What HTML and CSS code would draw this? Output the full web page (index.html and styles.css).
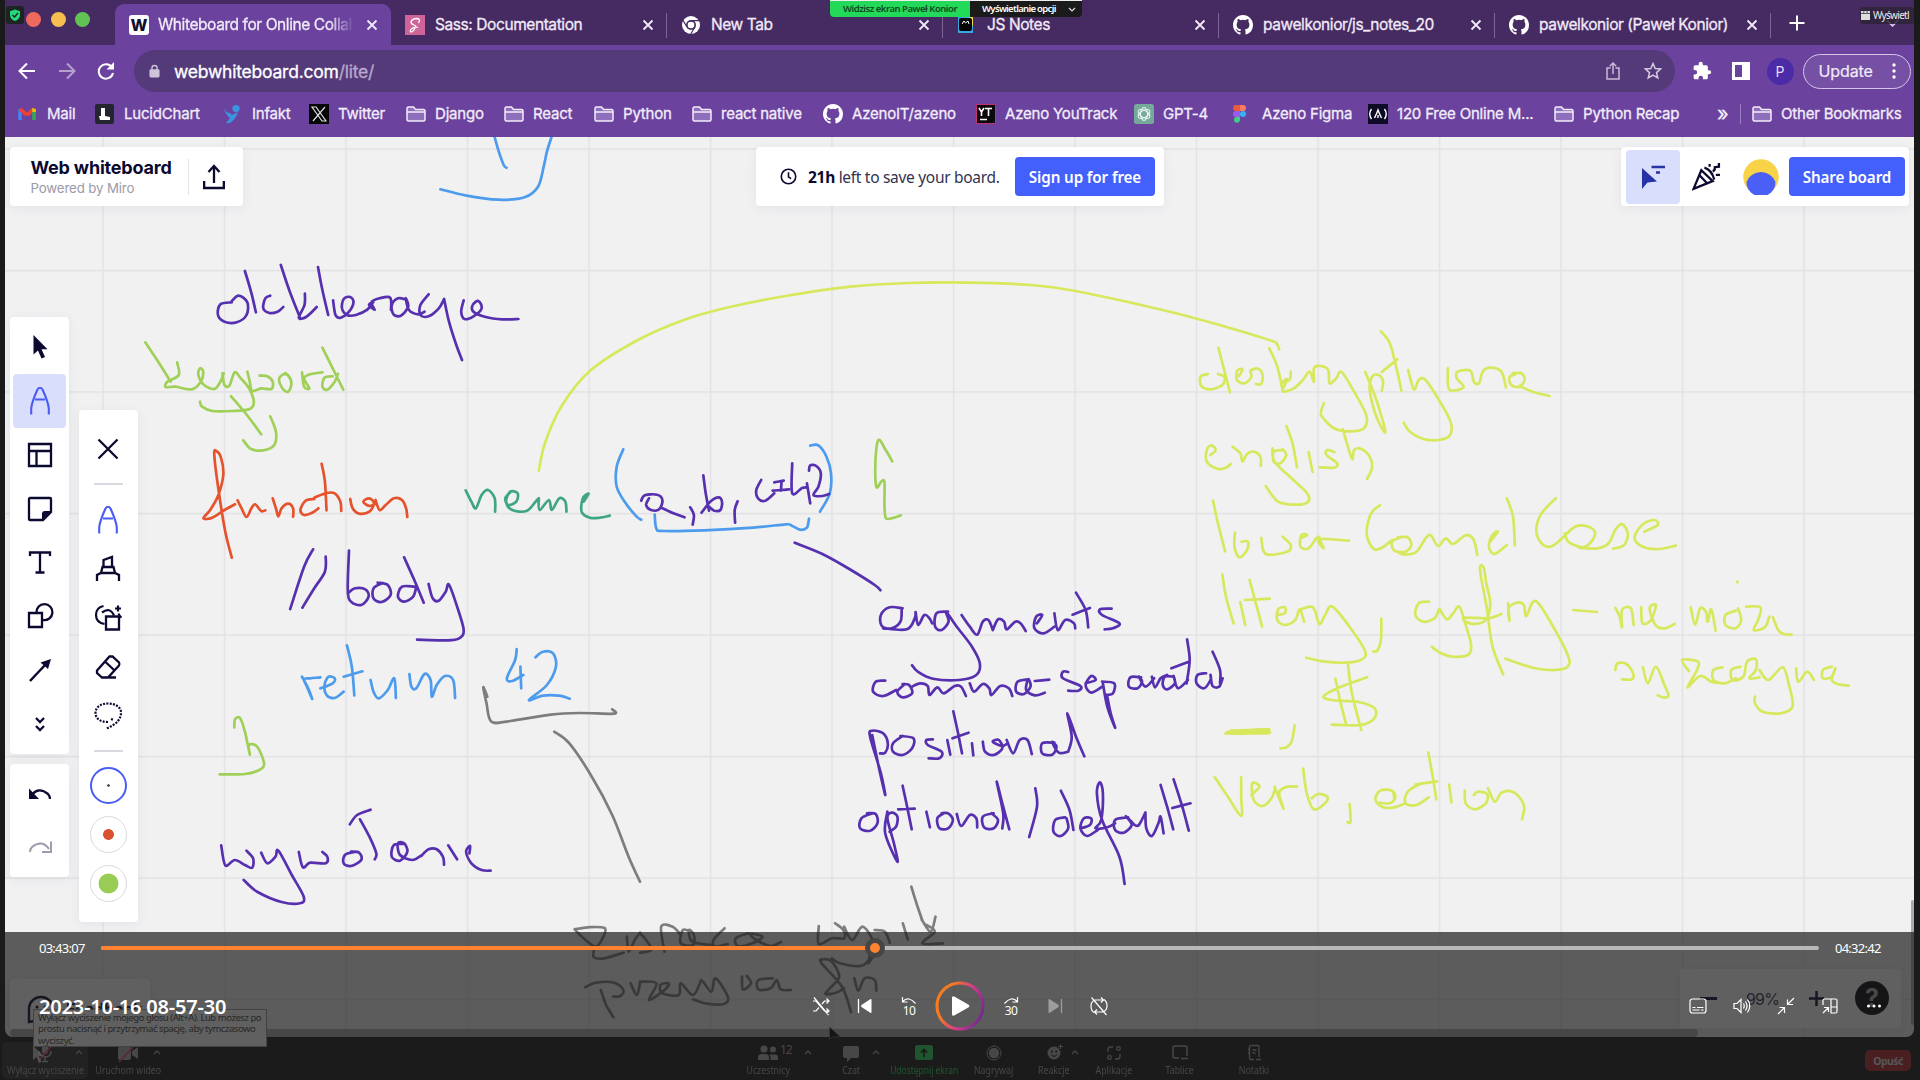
FILE: index.html
```html
<!DOCTYPE html>
<html lang="pl">
<head>
<meta charset="utf-8">
<title>2023-10-16 08-57-30</title>
<link rel="stylesheet" href="styles.css">
</head>
<body>
<svg class="defs" width="0" height="0" aria-hidden="true">
  <symbol id="close" viewBox="0 0 12 12"><path d="M1.5 1.5l9 9M10.500 1.500l-9 9" fill="none" stroke="currentColor" stroke-width="1.8"/></symbol>
  <symbol id="github" viewBox="0 0 16 16"><path fill="currentColor" d="M8 0C3.580 0 0 3.580 0 8c0 3.540 2.290 6.530 5.470 7.590.4.070.55-.17.55-.38 0-.19-.01-.82-.01-1.490-2.010.37-2.530-.49-2.690-.94-.09-.23-.48-.94-.82-1.130-.28-.15-.68-.52-.01-.53.63-.01 1.080.58 1.230.82.72 1.210 1.870.87 2.330.66.070-.52.28-.87.51-1.070-1.780-.2-3.640-.89-3.640-3.950 0-.87.31-1.590.82-2.150-.08-.2-.36-1.020.08-2.120 0 0 .67-.21 2.200.82a7.600 7.600 0 0 1 4 0c1.530-1.040 2.200-.82 2.200-.82.44 1.100.16 1.920.08 2.120.51.56.82 1.270.82 2.150 0 3.070-1.870 3.750-3.650 3.950.29.25.54.73.54 1.480 0 1.070-.01 1.930-.01 2.200 0 .21.15.46.55.38A8 8 0 0 0 16 8c0-4.420-3.580-8-8-8z"/></symbol>
  <symbol id="folder" viewBox="0 0 20 16"><path d="M1 13V2.500Q1 1 2.500 1h5l2 2.500h8Q19 3.500 19 5v8.500q0 1.500-1.500 1.500h-15Q1 15 1 13.500z" fill="#8f6fbb" stroke="#f3ecfa" stroke-width="1.500"/><path d="M1 6h18" stroke="#f3ecfa" stroke-width="1.500"/></symbol>
  <symbol id="pen" viewBox="0 0 20 28"><path d="M1.200 27.500v-6Q1.800 15 7.500 2.500q2.500-3.500 5 0Q18.200 15 18.800 21.500v6M5 12.500h10" fill="none" stroke="currentColor" stroke-width="2.100"/></symbol>
  <symbol id="caret" viewBox="0 0 8 5"><path d="M1 4l3-3 3 3" fill="none" stroke="currentColor" stroke-width="1.300"/></symbol>
</svg>
<div class="screen">
  <div class="browser">
    <header class="tabs">
      <div class="lights"><i class="red"></i><i class="yellow"></i><i class="green"></i></div>
      <div class="tab active"><span class="fav fav-w">W</span><span class="label">Whiteboard for Online Collab</span><svg class="x"><use href="#close"/></svg></div>
      <div class="tab"><svg class="fav sass" viewBox="0 0 20 20"><path d="M13.500 8q2.500-4-1.500-4.500-5 0-6 3.500Q6 9 9 10t1 3q-2 4-4 4-2-1 1-3.500 3-2 6-1" fill="none" stroke="#fff" stroke-width="1.300"/></svg><span class="label">Sass: Documentation</span><svg class="x"><use href="#close"/></svg></div>
      <div class="tab"><svg class="fav" viewBox="0 0 20 20"><circle cx="10" cy="10" r="9" fill="#fff"/><circle cx="10" cy="10" r="5" fill="#462b63"/><circle cx="10" cy="10" r="3.300" fill="#fff"/><path d="M10 5.600h9M6 12L1.800 5M14 12l-4.500 7.500" stroke="#462b63" stroke-width="1.200"/></svg><span class="label">New Tab</span><svg class="x"><use href="#close"/></svg></div>
      <div class="tab"><svg class="fav" viewBox="0 0 20 20"><path d="M1 2h15v16H1z" fill="#39a7e0"/><path d="M12 2h4v10z" fill="#f6d84c"/><rect x="2" y="3" width="13" height="13" rx="2" fill="#050505"/><path d="M5 9l2-3 1.500 2L11 6l1 3" stroke="#fff" fill="none"/></svg><span class="label">JS Notes</span><svg class="x"><use href="#close"/></svg></div>
      <div class="tab"><svg class="fav"><use href="#github"/></svg><span class="label">pawelkonior/js_notes_20</span><svg class="x"><use href="#close"/></svg></div>
      <div class="tab"><svg class="fav"><use href="#github"/></svg><span class="label">pawelkonior (Paweł Konior)</span><svg class="x"><use href="#close"/></svg></div>
      <svg class="plus" viewBox="0 0 16 16"><path d="M8 .5v15M.5 8h15" stroke="#fff" stroke-width="2"/></svg>
      <svg class="more" viewBox="0 0 14 8"><path d="M1 1l6 6 6-6" fill="none" stroke="#d8cce6" stroke-width="2"/></svg>
    </header>
    <div class="toolbar">
      <svg class="nav" viewBox="0 0 18 18"><path d="M17 9H2M9 1.500L1.500 9 9 16.500" fill="none" stroke="#fff" stroke-width="2"/></svg>
      <svg class="nav dim" viewBox="0 0 18 18"><path d="M1 9h15M9 1.500L16.500 9 9 16.500" fill="none" stroke="#fff" stroke-width="2"/></svg>
      <svg class="nav" viewBox="0 0 18 18"><path d="M15 5.500A7.200 7.200 0 1 0 16 11" fill="none" stroke="#fff" stroke-width="2"/><path d="M17 0v7.500H9.500z" fill="#fff"/></svg>
      <div class="address">
        <svg class="lock" viewBox="0 0 12 14"><path d="M3.200 6V3.800a2.800 2.800 0 0 1 5.600 0V6" fill="none" stroke="#cfc3dc" stroke-width="1.500"/><rect x=".5" y="5" width="11" height="9" rx="1.500" fill="#cfc3dc"/></svg>
        <span class="url">webwhiteboard.com<em>/lite/</em></span>
        <svg class="share" viewBox="0 0 14 18"><path d="M4.500 6H1v11h12V6H9.500M7 12V1.500M3.800 4.200L7 1l3.200 3.200" fill="none" stroke="#c9bcd8" stroke-width="1.500"/></svg>
        <svg class="star" viewBox="0 0 18 18"><path d="M9 1.500l2.200 5 5.500.5-4.200 3.600 1.300 5.400L9 13.200 4.200 16l1.300-5.400L1.300 7l5.500-.5z" fill="none" stroke="#d6cbe2" stroke-width="1.500"/></svg>
      </div>
      <svg class="puzzle" viewBox="0 0 24 24"><path fill="#fff" d="M20.500 11H19V7c0-1.100-.9-2-2-2h-4V3.500a2.500 2.500 0 0 0-5 0V5H4c-1.100 0-2 .9-2 2v3.800h1.500a2.700 2.700 0 0 1 0 5.400H2V20c0 1.100.9 2 2 2h3.800v-1.500a2.700 2.700 0 0 1 5.400 0V22H17c1.100 0 2-.9 2-2v-4h1.500a2.500 2.500 0 0 0 0-5z"/></svg>
      <svg class="side" viewBox="0 0 18 18"><path d="M0 0h18v18H0zM3 3v12h7V3z" fill="#fff" fill-rule="evenodd"/></svg>
      <span class="me">P</span>
      <span class="update">Update<svg viewBox="0 0 4 16"><circle cx="2" cy="2" r="1.700"/><circle cx="2" cy="8" r="1.700"/><circle cx="2" cy="14" r="1.700"/></svg></span>
    </div>
    <nav class="bookmarks">
      <span><svg viewBox="0 0 20 20"><path d="M2 16V5" stroke="#4285f4" stroke-width="3.500"/><path d="M2 5l7 6" stroke="#ea4335" stroke-width="3.800"/><path d="M9 11l7-6" stroke="#ea4335" stroke-width="3.800"/><path d="M16 16V5" stroke="#34a853" stroke-width="3.500"/><path d="M14.300 8V4l3.500 1v3z" fill="#fbbc04"/></svg>Mail</span>
      <span><svg viewBox="0 0 20 20"><rect width="19" height="20" rx="2" fill="#24252f"/><path d="M6 4h4v8l5 1v3H5l-1-4h2z" fill="#fff"/></svg>LucidChart</span>
      <span><svg viewBox="0 0 20 20"><circle cx="13" cy="4.500" r="3.600" fill="#3b94e0"/><path d="M1 4q2 5 6 5l2 2 6-3q-3 8-8 11H3l4-5Q2 10 1 4z" fill="#3b94e0"/></svg>Infakt</span>
      <span><svg viewBox="0 0 20 20"><path fill="#050505" d="M0 0h20v20H0z"/><path d="M3 3h4l10 14h-4zM16 3L4 17" fill="none" stroke="#ddd" stroke-width="1.200"/></svg>Twitter</span>
      <span><svg><use href="#folder"/></svg>Django</span>
      <span><svg><use href="#folder"/></svg>React</span>
      <span><svg><use href="#folder"/></svg>Python</span>
      <span><svg><use href="#folder"/></svg>react native</span>
      <span><svg><use href="#github"/></svg>AzenoIT/azeno</span>
      <span><svg viewBox="0 0 20 20"><path fill="#0a0a0a" stroke="#c43074" d="M.5.5h19v19H.5z"/><path d="M3 4l2.500 4v4m0-4L8 4M9 4.500h7M12.500 4.500V12M4 15.500h7" fill="none" stroke="#fff" stroke-width="1.600"/></svg>Azeno YouTrack</span>
      <span><svg viewBox="0 0 20 20"><rect width="20" height="20" rx="2.500" fill="#74a99b"/><g fill="none" stroke="#e5f1ed" stroke-width="1.100"><ellipse cx="10" cy="10" rx="3.500" ry="6.500"/><ellipse cx="10" cy="10" rx="3.500" ry="6.500" transform="rotate(60 10 10)"/><ellipse cx="10" cy="10" rx="3.500" ry="6.500" transform="rotate(120 10 10)"/></g></svg>GPT-4</span>
      <span><svg viewBox="0 0 20 20"><path d="M3 1h4v6H3a3 3 0 0 1 0-6z" fill="#ea5a3c"/><path d="M7 1h3a3 3 0 0 1 0 6H7z" fill="#f47b66"/><path d="M3 7h4v6H3a3 3 0 0 1 0-6z" fill="#9a5cf0"/><circle cx="10" cy="10" r="3" fill="#31b5f2"/><path d="M3 13h4v3a3 3 0 1 1-4-3z" fill="#3ecf84"/></svg>Azeno Figma</span>
      <span><svg viewBox="0 0 20 20"><path fill="#0d0b26" d="M0 0h20v20H0z"/><path d="M3.500 5Q0 10 3.500 15M16.500 5q3.500 5 0 10M6.500 14q2-4 3.500-8 1.500 4 3.500 8M10 14v-3" fill="none" stroke="#fff" stroke-width="1.400"/></svg>120 Free Online M...</span>
      <span><svg><use href="#folder"/></svg>Python Recap</span>
      <span class="overflow">»</span>
      <span class="other"><svg><use href="#folder"/></svg>Other Bookmarks</span>
    </nav>
    <main class="board">
      <svg class="ink" viewBox="5 137 1909 900" width="1909" height="900">
        <defs><pattern id="grid" x="102.300" y="148.300" width="121.500" height="121.500" patternUnits="userSpaceOnUse"><path d="M0 .7h121.500M.7 0v121.500" stroke="#e2e2e4" stroke-width="1.400"/></pattern></defs>
        <path fill="url(#grid)" d="M5 137h1909v900H5z"/>
        <g id="strokes"></g>
      </svg>

      <section class="card brand">
        <div><b>Web whiteboard</b><small>Powered by Miro</small></div>
        <svg viewBox="0 0 22 26"><path d="M1 17v7h20v-7" fill="none" stroke="#0b0930" stroke-width="2.600"/><path d="M11 19V2.500M5.500 8L11 2l5.500 6" fill="none" stroke="#0b0930" stroke-width="2.300"/></svg>
      </section>
      <section class="card banner">
        <svg viewBox="0 0 16 16"><circle cx="8" cy="8" r="6.800" fill="none" stroke="#0b0930" stroke-width="1.500"/><path d="M8 4v4.500l2.500 1.500" fill="none" stroke="#0b0930" stroke-width="1.500"/></svg>
        <span><b>21h</b> left to save your board.</span>
        <button class="btn">Sign up for free</button>
      </section>
      <section class="card actions">
        <span class="on"><svg viewBox="0 0 24 24"><path d="M1 3v21l5.500-6.500 9.500-1z" fill="#2733a5"/><path d="M10.500 2H24M15 7.500h4" stroke="#2733a5" stroke-width="2.300"/></svg></span>
        <svg class="party" viewBox="0 0 28 28"><path d="M9 8L1.500 26 20 18.500zM12 5.500q7 2 9.500 11.500M7.500 13l7.500 8M17 2v2.500M20 9q2.500-1 2-4l4-.5V1M23 12.500h4" fill="none" stroke="#0b0930" stroke-width="2.200"/></svg>
        <svg class="face" viewBox="0 0 36 36"><circle cx="18" cy="18" r="17.800" fill="#f8d348"/><path d="M2 25a18 18 0 0 0 32 0" fill="#f4c4a0"/><path d="M3.500 23a15.500 15.500 0 0 1 29 0 14.500 14.500 0 0 1-29 0z" fill="#4a5ff5"/></svg>
        <button class="btn">Share board</button>
      </section>

      <aside class="card tools">
        <span><svg viewBox="0 0 28 28"><path d="M7.500 2v19.500l4.500-4 3.500 8 3.500-1.600-3.500-7.600h6z" fill="#0b0930"/></svg></span>
        <span class="on"><svg class="tall"><use href="#pen"/></svg></span>
        <span><svg viewBox="0 0 28 28"><path d="M3 3h22v22H3zM3 10h22M10.500 10v15" fill="none" stroke="#0b0930" stroke-width="2.300"/></svg></span>
        <span><svg viewBox="0 0 28 28"><path d="M4 3h20q1 0 1 1v13l-8 8H4q-1 0-1-1V4q0-1 1-1z" fill="none" stroke="#0b0930" stroke-width="2.300"/><path d="M25 16h-6q-3 0-3 3v6z" fill="#0b0930"/></svg></span>
        <span><svg viewBox="0 0 28 28"><path d="M4 8V4.500h20V8M14 4.500v20M9.500 24.500h9" fill="none" stroke="#0b0930" stroke-width="2.300"/></svg></span>
        <span><svg viewBox="0 0 28 28"><path d="M3 11h13v14H3z" fill="none" stroke="#0b0930" stroke-width="2.300"/><path d="M10.500 11A8 8 0 1 1 17 18" fill="none" stroke="#0b0930" stroke-width="2.300"/></svg></span>
        <span><svg viewBox="0 0 28 28"><path d="M4 25L20 8" stroke="#0b0930" stroke-width="2.500"/><path d="M25 3l-3 10-7.500-6.500z" fill="#0b0930"/></svg></span>
        <span><svg viewBox="0 0 28 28"><path d="M10 8l4 4 4-4M10 16l4 4 4-4" fill="none" stroke="#0b0930" stroke-width="2.300"/></svg></span>
      </aside>
      <aside class="card history">
        <span><svg viewBox="0 0 28 28"><path d="M5 16q7-10 17-2 2 2 2 5" fill="none" stroke="#0b0930" stroke-width="2.300"/><path d="M3 8.500V19h10z" fill="#0b0930"/></svg></span>
        <span class="faded"><svg viewBox="0 0 28 28"><path d="M23 16q-7-10-17-2-2 2-2 5" fill="none" stroke="#0b0930" stroke-width="2"/><path d="M25 8.500V19H16" fill="none" stroke="#0b0930" stroke-width="2"/></svg></span>
      </aside>
      <aside class="card pens">
        <span><svg viewBox="0 0 28 28"><path d="M4.500 4.500l19 19M23.500 4.500l-19 19" stroke="#0b0930" stroke-width="2.300"/></svg></span>
        <hr>
        <span class="blue"><svg class="tall"><use href="#pen"/></svg></span>
        <span><svg viewBox="0 0 28 28"><path d="M3 26v-6l4-2h14l4 2v6M7 18l1.500-6h11L21 18M9.500 12V5l8.500-3v10" fill="none" stroke="#0b0930" stroke-width="2.300"/></svg></span>
        <span><svg viewBox="0 0 28 28"><path d="M12 12.500h13v13H12z" fill="none" stroke="#0b0930" stroke-width="2.300"/><path d="M10.500 20Q2 18.500 2 11T9.500 2M8 8.500q8-6 12 3M21 4.500h6M24 1.500v6M24.500 9.500q1 3 3 4" fill="none" stroke="#0b0930" stroke-width="2.200"/></svg></span>
        <span><svg viewBox="0 0 28 28"><path d="M3 17.500L15.500 3.500h3l6.500 6q1 2 0 3L14 24.500H8L3 20zM11 8.500L20 17M15 24.500h7" fill="none" stroke="#0b0930" stroke-width="2.300"/></svg></span>
        <span><svg viewBox="0 0 28 28"><path d="M14 20c-7 0-12.500-3-12.500-9S7 1.500 14 1.500 27 5 27 10.500 24 22 12 26.500M17 17l3 1" fill="none" stroke="#0b0930" stroke-width="2.200" stroke-dasharray="2 1.300"/></svg></span>
        <hr>
        <i class="dot sel"></i><i class="dot mid"></i><i class="dot big"></i>
      </aside>

      <section class="card feedback"><svg viewBox="0 0 28 30"><path d="M2 28V14a12 12 0 1 1 12 13H7z" fill="none" stroke="#0b0930" stroke-width="2.400"/><circle cx="10" cy="13" r="1.500"/><circle cx="18" cy="13" r="1.500"/></svg><b>Feedback</b></section>
      <section class="card zoomer"><i class="minus"></i><span>99%</span><svg viewBox="0 0 18 18"><path d="M9 1v16M1 9h16" stroke="#0b0930" stroke-width="2.600"/></svg><b>?</b></section>
      <div class="hbar"></div>
      <div class="vbar"></div>
    </main>
  </div>

  <footer class="meeting">
    <div class="cell mute"><svg viewBox="0 0 24 20"><rect x="9" y="1" width="6" height="10" rx="3" fill="#bbb"/><path d="M6 8q0 6 6 6t6-6M12 14v4M9 18.500h6" fill="none" stroke="#bbb" stroke-width="1.500"/><path d="M20 1L5 19" stroke="#f0465a" stroke-width="1.600"/></svg><svg class="car"><use href="#caret"/></svg><em>Wyłącz wyciszenie</em></div>
    <div class="cell cam"><svg viewBox="0 0 24 20"><rect x="2" y="3" width="13" height="14" rx="2.500" fill="#aaa"/><path d="M16 8l6-4v12l-6-4z" fill="#aaa"/><path d="M20 1L3 19" stroke="#f0465a" stroke-width="1.600"/></svg><svg class="car"><use href="#caret"/></svg><em>Uruchom wideo</em></div>
    <div class="cell people"><svg viewBox="0 0 24 20"><circle cx="8" cy="6" r="3.600" fill="#aaa"/><circle cx="17" cy="6.500" r="3" fill="#aaa"/><path d="M2 17v-2.500q0-3.500 3.500-3.500h4q3.500 0 3.500 3.500V17zM14.500 17v-3l-1-2.500h6q2.500 0 2.500 3V17z" fill="#aaa"/></svg><b>12</b><svg class="car"><use href="#caret"/></svg><em>Uczestnicy</em></div>
    <div class="cell chat"><svg viewBox="0 0 24 20"><path d="M6 3h12q2 0 2 2v8q0 2-2 2h-6l-4 4v-4H6q-2 0-2-2V5q0-2 2-2z" fill="#aaa"/></svg><svg class="car"><use href="#caret"/></svg><em>Czat</em></div>
    <div class="cell go"><svg viewBox="0 0 24 20"><rect x="3" y="2" width="18" height="15" rx="2.500" fill="#23d959"/><path d="M12 14V7M9 9.500L12 6.500l3 3" fill="none" stroke="#111" stroke-width="1.600"/></svg><em>Udostępnij ekran</em></div>
    <div class="cell record"><svg viewBox="0 0 24 20"><circle cx="12" cy="10" r="7" fill="none" stroke="#aaa"/><circle cx="12" cy="10" r="5.200" fill="#aaa"/></svg><em>Nagrywaj</em></div>
    <div class="cell react"><svg viewBox="0 0 24 20"><circle cx="12" cy="10" r="6.500" fill="#aaa"/><circle cx="9.800" cy="8.500" r=".9"/><circle cx="14.200" cy="8.500" r=".9"/><path d="M9 11.500q3 3.500 6 0" fill="none" stroke="#111"/><path d="M18.500 1v5M16 3.500h5" stroke="#aaa"/></svg><svg class="car"><use href="#caret"/></svg><em>Reakcje</em></div>
    <div class="cell apps"><svg viewBox="0 0 24 20"><g fill="none" stroke="#aaa" stroke-width="1.300"><path d="M11 4H8Q6 4 6 7v2M13 16h3q2 0 2-3v-2"/><circle cx="16.500" cy="5.500" r="1.800"/><circle cx="7.500" cy="14.500" r="1.800"/></g></svg><em>Aplikacje</em></div>
    <div class="cell boards"><svg viewBox="0 0 24 20"><path d="M11 15H7q-2 0-2-2V5q0-2 2-2h10q2 0 2 2v8M13 15.500h7" fill="none" stroke="#aaa" stroke-width="1.500"/></svg><em>Tablice</em></div>
    <div class="cell notes"><svg viewBox="0 0 24 20"><path d="M12 16.500H9q-1.500 0-1.500-1.500V4q0-1.500 1.500-1.500h6.500Q17 2.500 17 4v10M6 6.500h2M6 10h2M10.500 7h4M10.500 10h3M14 16.500h5" fill="none" stroke="#aaa" stroke-width="1.300"/></svg><em>Notatki</em></div>
    <button class="leave">Opuść</button>
  </footer>
  <div class="tip">Wyłącz wyciszenie mojego głosu (Alt+A). Lub możesz po<br>prostu nacisnąć i przytrzymać spację, aby tymczasowo<br>wyciszyć.</div>
  <svg class="arrow one" viewBox="0 0 12 18"><path d="M0 0v14l3.500-3 2.500 6 2.500-1-2.500-6h5z" fill="#fff"/></svg>
  <svg class="arrow two" viewBox="0 0 12 14"><path d="M.5 0v12l3-2h8z" fill="#000" stroke="#888" stroke-width=".6"/></svg>

  <svg class="shield" viewBox="0 0 18 18"><rect width="18" height="18" rx="3" fill="#1d2423"/><path d="M9 3.500l5 1.700V9q0 4-5 6-5-2-5-6V5.200z" fill="#23d97a"/><path d="M6.500 9l2 2 3.500-4" fill="none" stroke="#1d2423" stroke-width="1.400"/></svg>
  <div class="sharing"><span>Widzisz ekran Paweł Konior</span><b>Wyświetlanie opcji</b><svg viewBox="0 0 8 5"><path d="M1 1l3 3 3-3" fill="none" stroke="#ddd" stroke-width="1.200"/></svg></div>
  <div class="view"><svg viewBox="0 0 9 9"><path d="M0 0h2.500v2H0zM3.200 0h2.500v2H3.200zM6.400 0H9v2H6.400zM0 2.700h9V9H0z" fill="#ddd"/></svg>Wyświetl</div>

  <section class="player">
    <div class="seek"><time>03:43:07</time><div class="track"><i></i><b></b></div><time>04:32:42</time></div>
    <div class="controls">
      <h1>2023-10-16 08-57-30</h1>
      <div class="center">
        <svg viewBox="0 0 20 20"><path d="M2 5h3l8.500 10H18M2 15h3l3-3.500M11 8l2.500-3H18M15.500 2.500L18 5l-2.500 2.500M15.500 12.500L18 15l-2.500 2.500M3 1.500L17.500 19" fill="none" stroke="#fff" stroke-width="1.200"/></svg>
        <svg viewBox="0 0 20 20"><path d="M3.500 3v14" stroke="#fff" stroke-width="1.300"/><path d="M16.500 4v12q0 1.500-1.300.7L6.500 11q-1-1 0-2l8.700-5.700q1.300-.8 1.300.7z" fill="#fff"/></svg>
        <span class="skip"><svg viewBox="0 0 20 9"><path d="M3.500 1v5h5M3.700 5.500q6-6 12.800 2" fill="none" stroke="#fff" stroke-width="1.200"/></svg>10</span>
        <svg class="play" viewBox="0 0 50 50"><defs><linearGradient id="ring" x1="0" y1=".3" x2="1" y2=".7"><stop offset=".2" stop-color="#f47b20"/><stop offset=".6" stop-color="#d83a8c"/><stop offset="1" stop-color="#6d2a8e"/></linearGradient></defs><circle cx="25" cy="25" r="23" fill="none" stroke="url(#ring)" stroke-width="3.200"/><path d="M17 17v16q0 2.500 2.200 1.400l14.500-8.200q1.600-1.200 0-2.400l-14.500-8.200Q17 14.500 17 17z" fill="#fff"/></svg>
        <span class="skip"><svg viewBox="0 0 20 9"><path d="M16.500 1v5h-5M16.300 5.500q-6-6-12.800 2" fill="none" stroke="#fff" stroke-width="1.200"/></svg>30</span>
        <svg class="off" viewBox="0 0 20 20"><path d="M16.500 3v14" stroke="#fff" stroke-width="1.300"/><path d="M3.500 4v12q0 1.500 1.300.7l8.700-5.700q1-1 0-2L4.800 3.300Q3.500 2.500 3.500 4z" fill="#fff"/></svg>
        <svg viewBox="0 0 20 20"><path d="M5 16.500Q2 14.500 2 10t4-6h8M12 1.500L14.500 4 12 6.500M15 3.500q3 2 3 6.500t-4 6H6M8 13.500L5.500 16 8 18.500M2.500 1.500l15 17.500" fill="none" stroke="#fff" stroke-width="1.200"/></svg>
      </div>
      <div class="right">
        <svg viewBox="0 0 20 20"><rect x="2" y="3" width="16" height="14" rx="2.500" fill="none" stroke="#fff" stroke-width="1.200"/><path d="M4.500 11.500h3M9 11.500h6.500M4.500 14h7M13 14h2.500" stroke="#fff" stroke-width="1.200"/></svg>
        <svg viewBox="0 0 20 20"><path d="M2 7.500v5h3l4 4v-13l-4 4zM11.500 7.500q1.500 2.500 0 5M13.500 5.500q3 4.500 0 9M15.500 3.500q4.500 6.500 0 13" fill="none" stroke="#fff" stroke-width="1.200"/></svg>
        <svg viewBox="0 0 20 20"><path d="M18 2l-6.500 6.500M11.500 3.500v5h5.500M2 18l6.500-6.500M3.500 11.500h5V17" fill="none" stroke="#fff" stroke-width="1.200"/></svg>
        <svg viewBox="0 0 20 20"><path d="M3 9V4.500Q3 3 4.500 3h11Q17 3 17 4.500v11q0 1.500-1.500 1.500H11V11H17M11 11V3M3 17l5-5M4 11.500h4.500V16" fill="none" stroke="#fff" stroke-width="1.200"/></svg>
        <svg viewBox="0 0 20 20"><circle cx="4.500" cy="10" r="1.500" fill="#fff"/><circle cx="10" cy="10" r="1.500" fill="#fff"/><circle cx="15.500" cy="10" r="1.500" fill="#fff"/></svg>
      </div>
    </div>
  </section>
</div>
<script src="board.js"></script>
</body>
</html>
```
FILE: styles.css
```css
* { box-sizing: border-box; }
body { margin: 0; background: #1a1a1a; font-family: Inter, "Liberation Sans", sans-serif; }
.defs { position: absolute; }
svg { display: block; flex: none; }
em { font-style: normal; }
button { border: 0; font: inherit; }

.screen { position: relative; width: 1920px; height: 1080px; overflow: hidden; background: #1a1a1a; display: flex; flex-direction: column; }
.browser { height: 1037px; margin: 0 6px 0 5px; display: flex; flex-direction: column; background: #6b439f; border-radius: 0 0 8px 8px; overflow: hidden; flex: none; }

.tabs { height: 45px; background: #462b63; display: flex; align-items: center; color: #f1eaf7; font-size: 15.500px; }
.lights { width: 110px; display: flex; gap: 9.500px; padding-left: 21px; margin-bottom: 6px; }
.lights i { width: 15px; height: 15px; border-radius: 50%; }
.red { background: #ee6a5f; }
.yellow { background: #f5be4f; }
.green { background: #61c354; }
.tab { width: 276px; height: 41px; align-self: flex-end; display: flex; align-items: center; padding: 0 13px 0 14px; position: relative; }
.tab:not(.active)::after { content: ""; position: absolute; right: 0; top: 9px; width: 1px; height: 25px; background: #7c6695; }
.tab.active { background: #6b439f; border-radius: 9px 9px 0 0; }
.fav { width: 20px; height: 20px; margin-right: 10px; color: #fff; }
.fav-w { background: #fff; color: #141033; border-radius: 3px; font-weight: 800; font-size: 16px; line-height: 20px; text-align: center; }
.sass { background: #cf649a; }
.label { flex: 1; white-space: nowrap; overflow: hidden; -webkit-text-stroke: .3px; letter-spacing: -.42px; }
.active .label { margin-right: 12px; margin-left: -1px; -webkit-mask-image: linear-gradient(90deg, #000 87%, transparent); mask-image: linear-gradient(90deg, #000 87%, transparent); }
.x { width: 12px; height: 12px; }
.plus { width: 16px; height: 16px; margin-left: 18px; }
.more { width: 13px; height: 8px; margin-left: 81px; }

.toolbar { height: 52px; display: flex; align-items: center; padding-left: 13px; }
.nav { width: 18px; height: 18px; margin-right: 21.500px; }
.dim { opacity: .5; }
.address { width: 1541px; height: 42px; margin-left: -3px; border-radius: 21px; background: #553a7a; display: flex; align-items: center; padding-left: 15px; }
.lock { width: 11px; height: 14px; margin-right: 14.500px; }
.url { flex: 1; color: #fff; font-size: 17.500px; letter-spacing: -.22px; -webkit-text-stroke: .3px; }
.url em { color: #b9a9cc; }
.share { width: 14px; height: 18px; margin-right: 24px; }
.star { width: 18px; height: 18px; margin-right: 13px; }
.puzzle { width: 20px; height: 20px; margin-left: 17px; }
.side { width: 18px; height: 18px; margin-left: 20px; }
.me { width: 27px; height: 27px; margin-left: 17px; border-radius: 50%; background: #4b2ba6; color: #e5def5; font-size: 14px; line-height: 27px; text-align: center; }
.update { width: 108px; height: 35px; margin-left: 9px; padding: 0 14px 0 15px; border: 1.500px solid #d5c6e8; border-radius: 18px; background: #7650a5; display: flex; align-items: center; justify-content: space-between; color: #f1eaf7; font-size: 16px; letter-spacing: -.1px; -webkit-text-stroke: .2px; }
.update svg { width: 4px; height: 16px; fill: #fff; }

.bookmarks { height: 40px; padding: 0 0 7px 13px; display: grid; align-items: center; color: #f3ecfa; font-size: 15px; letter-spacing: -.2px; white-space: nowrap; -webkit-text-stroke: .3px;
  grid-template-columns: 77px 128px 86px 97px 98px 90px 98px 131px 153px 158px 99px 135px 186px 163px 35px 160px; }
.bookmarks span { display: flex; align-items: center; position: relative; }
.bookmarks svg { width: 20px; height: 20px; margin-right: 9px; color: #fff; }
.overflow { font-size: 20px; }
.other::before { content: ""; position: absolute; left: -12px; top: 0; width: 1px; height: 20px; background: #9c80c0; }

.board { position: relative; height: 900px; background: #f1f1f2; flex: none; }
.ink { position: absolute; inset: 0; }
.card { position: absolute; background: #fff; border-radius: 4px; box-shadow: 0 2px 12px rgba(60, 50, 110, .07); display: flex; color: #0b0930; }
.brand { left: 5px; top: 10px; width: 233px; height: 59px; padding-left: 20.500px; align-items: center; }
.brand div { width: 158px; height: 36px; border-right: 1px solid #e2e2e8; }
.brand b { display: block; font-size: 18px; line-height: 20px; letter-spacing: -.2px; margin-top: -1px; }
.brand small { display: block; font-size: 13.300px; line-height: 20px; letter-spacing: -.15px; color: #9b9aa8; }
.brand svg { width: 22px; height: 26px; margin-left: 14px; }
.banner { left: 751px; top: 10px; width: 408px; height: 59px; padding: 0 9px 0 24px; align-items: center; font: 15.500px "Noto Sans", sans-serif; color: #33324f; letter-spacing: -.3px; white-space: nowrap; }
.banner b { color: #0b0930; }
.banner svg { width: 17px; height: 17px; margin-right: 11px; }
.banner span { flex: 1; }
.btn { height: 39px; border-radius: 4px; background: #4460fc; color: #fff; font: 600 15.200px "Noto Sans", sans-serif; padding: 0; white-space: nowrap; }
.banner .btn { width: 140px; letter-spacing: -.12px; }
.actions { left: 1616px; top: 10px; width: 288px; height: 59px; padding-left: 5px; align-items: center; }
.on { background: #dadefd; border-radius: 4px; color: #4a5cf6; }
.actions .on { width: 54px; height: 54px; display: grid; place-items: center; }
.on svg { width: 24px; height: 24px; }
.party { width: 29px; height: 29px; margin-left: 12px; }
.face { width: 36px; height: 36px; margin-left: 22px; }
.actions .btn { width: 116px; margin-left: 10px; letter-spacing: -.1px; }

.tools { left: 5px; top: 180px; width: 59px; height: 437px; padding: 3px; flex-direction: column; }
.tools span, .history span { flex: 1; display: grid; place-items: center; }
.tools svg, .history svg, .pens svg { width: 28px; height: 28px; }
.card svg.tall { width: 20px; height: 28px; }
.tools .on { border-radius: 4px; }
.history { left: 5px; top: 627px; width: 59px; height: 113px; padding: 3px; flex-direction: column; }
.faded { opacity: .4; }
.pens { left: 74px; top: 273px; width: 59px; height: 512px; padding-top: 14px; padding-right: 1px; flex-direction: column; align-items: center; }
.pens span { height: 49px; display: grid; place-items: center; }
.pens .blue { color: #4a5cf6; }
.pens hr { width: 29px; height: 2px; margin: 10px 0; border: 0; background: #d9d9e0; flex: none; }
.dot { width: 37px; height: 37px; border: 1.500px solid #d9d9df; border-radius: 50%; margin-bottom: 12px; flex: none; }
.dot.sel { margin-top: 5px; border: 2px solid #4a5cf6; background: radial-gradient(circle, #555 1px, #fff 1.600px); }
.dot.mid { background: radial-gradient(circle, #d9512f 5px, #fff 5.800px); }
.dot.big { background: radial-gradient(circle, #98cc55 9.500px, #fff 10.300px); }

.feedback { left: 5px; top: 842px; width: 140px; height: 59px; padding-left: 17px; align-items: center; font-size: 16px; gap: 11px; }
.feedback svg { width: 28px; height: 30px; }
.zoomer { left: 1675px; top: 832px; width: 221px; height: 59px; align-items: center; padding-left: 20px; font-size: 16px; color: #33324f; }
.zoomer .minus { width: 17px; height: 3px; background: #0b0930; }
.zoomer span { margin-left: 29px; width: 50px; letter-spacing: -.8px; }
.zoomer svg { width: 17px; height: 17px; margin-left: 12px; }
.zoomer b { width: 34px; height: 34px; margin-left: 30px; border-radius: 50%; background: #050510; color: #aaa; font-size: 25px; line-height: 34px; text-align: center; margin-bottom: 2px; }
.hbar { position: absolute; left: 5px; top: 892px; width: 1688px; height: 8px; border-radius: 4px; background: #aaa; }
.vbar { position: absolute; right: 0; top: 763px; width: 3px; height: 125px; border-radius: 3px; background: #aaa; }

.meeting { height: 43px; display: flex; color: #a5a5a5; font: 11px "Noto Sans", sans-serif; }
.cell { position: relative; display: flex; flex-direction: column; align-items: center; padding-top: 6px; flex: none; white-space: nowrap; }
.cell svg { width: 24px; height: 20px; }
.cell em { line-height: 14px; transform: scaleX(.8); }
.cell .car { position: absolute; top: 13px; left: 50%; margin-left: 25px; width: 8px; height: 5px; }
.cell b { position: absolute; top: 4px; left: 46px; font-weight: 400; font-size: 12px; letter-spacing: -1.200px; }
.mute { width: 86px; margin: 5px 2px 1px; padding-top: 1px; background: #2f2f2f; border-radius: 5px; }
.mute em { transform: scaleX(.83); }
.mute .car { top: 8px; margin-left: 30px; }
.cam { width: 76px; }
.people { width: 68px; margin-left: 568px; }
.people .car { margin-left: 36px; }
.chat { width: 98px; }
.chat .car { margin-left: 21px; }
.go { width: 48px; color: #23d959; }
.go em { margin: 0 -30px; transform: scaleX(.77); }
.record, .apps { width: 92px; }
.react { width: 28px; }
.react em { margin: 0 -10px; }
.react .car { margin-left: 17px; }
.boards { width: 40px; }
.notes { width: 108px; }
.leave { width: 46px; height: 21px; margin: 13px 9px 0 auto; padding: 0; background: #b3262c; color: #ddd; border-radius: 5px; font: 700 10.500px "Noto Sans", sans-serif; letter-spacing: -.6px; }

.tip { position: absolute; left: 33px; top: 1009px; width: 234px; height: 38px; padding: 2px 4px; background: #fff; border: 1px solid #999; color: #444; font: 9.500px/11.300px "Noto Sans", sans-serif; white-space: nowrap; letter-spacing: -.45px; }
.arrow { position: absolute; width: 12px; height: 18px; }
.one { left: 33px; top: 1046px; opacity: .7; }
.two { left: 829px; top: 1027px; height: 14px; }
.shield { position: absolute; left: 6px; top: 6px; width: 18px; height: 18px; }
.sharing { position: absolute; left: 830px; top: 0; width: 252px; height: 17px; display: flex; align-items: center; border-radius: 0 0 4px 4px; overflow: hidden; background: #1b1b1b; font: 600 9.500px/16px "Noto Sans", sans-serif; white-space: nowrap; letter-spacing: -.48px; border-top: 1px solid #eee; }
.sharing span { width: 140px; background: #23d959; color: #10481f; text-align: center; }
.sharing b { width: 73px; margin: 0 13px 0 12px; color: #fff; font-weight: 600; letter-spacing: -.68px; }
.sharing svg { width: 8px; height: 5px; }
.view { position: absolute; left: 1860px; top: 7px; width: 54px; height: 17px; background: rgba(45, 35, 55, .85); color: #eee; font: 10px/17px "Noto Sans", sans-serif; letter-spacing: -.7px; display: flex; align-items: center; gap: 3px; border-radius: 3px; white-space: nowrap; }
.view svg { width: 9px; height: 9px; margin-left: 1px; }

.player { position: absolute; left: 0; bottom: 0; width: 1920px; height: 148px; background: rgba(28, 28, 28, .7); color: #fff; }
.seek { height: 32px; display: flex; align-items: center; padding: 0 40px 0 39px; font: 13px "Noto Sans", sans-serif; letter-spacing: -.75px; }
.seek time { width: 62px; line-height: 16px; }
.seek time:last-child { width: 45px; margin-left: 16px; }
.track { flex: 1; height: 4px; border-radius: 2px; position: relative; background: #b9b9b9; }
.track i { display: block; width: 774px; height: 4px; background: #ff8230; border-radius: 2px; }
.track b { position: absolute; left: 764px; top: -8px; width: 20px; height: 20px; border-radius: 50%; background: #ff8230; border: 5px solid #454545; }
.controls { height: 50px; margin-top: 17px; display: grid; grid-template-columns: 1fr auto 1fr; align-items: center; padding: 0 36px 0 39px; }
.controls svg { width: 20px; height: 20px; }
h1 { margin: 0; font: 600 20px "Noto Sans", sans-serif; letter-spacing: -.2px; }
.center { display: flex; align-items: center; gap: 24px; margin: 0 1.500px 0 -1.500px; }
.controls .play { width: 50px; height: 50px; margin: 0 -8px; }
.skip { width: 20px; height: 20px; font: 12px/12px "Noto Sans", sans-serif; text-align: center; letter-spacing: -.6px; }
.skip svg { width: 20px; height: 9px; }
.off { opacity: .4; }
.right { display: flex; gap: 24px; justify-content: flex-end; }
```
FILE: board.js
```js
// Handwriting on the board. Every group is one recorded area: its origin,
// its horizontal resolution and the pen strokes as "x,y x,y ..." samples.
const PURPLE = '#5630ae', LIME = '#a0d057', RED = '#e5522c', TEAL = '#3fa582';
const BLUE = '#4d9bec', YELLOW = '#d8e85c', GREY = '#7d7d7d';
const groups = [
  [0, 0, 2.45, BLUE, `1212,412 1222,455 1234,495 1241,503|1079,568 1140,586 1220,599 1285,592 1318,560 1332,500 1340,455 1351,412`],
  [0, 215, 2.45, PURPLE, `568,262 540,268 534,300 550,320 580,322 604,300 606,262 585,242 568,258|600,168 615,230 627,292|662,242 650,250 645,280 660,294 680,290 694,276|688,150 710,230 735,308|747,236 746,270 732,308 750,306 776,276|779,156 790,225 804,300|816,256 822,300 835,308 855,290 866,262 858,246 842,252 838,280 850,300 872,300 900,284 914,262|914,262 904,270 918,284 910,262 930,250 956,248 958,285|995,254 975,250 960,270 964,298 982,302 1000,275 994,250 1002,285 1025,298 1040,290|1050,238 1030,270 1030,300 1050,304 1075,280 1088,252|1088,252 1100,320 1118,390 1132,435|1136,256 1130,290 1138,312 1160,304 1180,280 1172,258 1158,270 1160,290 1190,306 1230,313 1270,312`],
  [0, 215, 2.45, LIME, `356,382 385,435 418,500|434,442 438,480 410,500 406,516 430,515 470,523 492,500 498,470 490,460 486,480 500,510 525,522 540,500 548,475|545,475 550,510 562,512 575,472 590,490 610,520 622,560 612,582 570,588 520,588 495,575 490,560|606,470 612,500 618,528 640,520 665,522 668,500 655,484 636,482|700,474 684,490 692,520 706,530 714,505 705,480 694,478|740,472 745,515 758,520 745,490 760,478 790,472|815,484 795,488 790,515 802,524 820,500 828,476|790,398 815,460 841,524|566,544 605,600 640,658|662,604 676,650 672,690 645,706 615,702 596,676`],
  [0, 215, 2.45, RED, `568,1028 552,950 536,830 525,720 530,708 542,730 547,780 535,840 515,885 498,910 520,908 550,885 576,868|582,856 592,880 604,906 616,880 625,868 640,888 650,886|668,850 676,880 682,904 690,880 706,866 718,880 718,905|770,852 748,858 736,885 745,900 765,893 780,880|788,746 796,800 800,886|770,848 800,834 820,835 834,860 836,888|858,852 864,880 880,896 905,890 916,865 905,850 890,860 905,873 922,865|920,855 930,885 945,870 965,850 985,855 995,880 998,906`],
  [0, 215, 2.45, TEAL, `1141,826 1155,860 1166,880 1180,840 1196,825 1212,850 1213,890|1250,832 1238,850 1245,870 1265,860 1268,835 1250,830 1240,860 1255,885 1290,888 1312,860 1320,850|1320,850 1322,885 1345,855 1352,885 1370,850 1385,860 1388,890|1430,860 1442,836 1428,850 1425,890 1445,908 1470,908 1494,902`],
  [500, 260, 2.45, YELLOW, `95,632 110,550 150,440 218,335 330,245 450,180 560,142 700,108 860,80 1000,69 1150,68 1300,75 1410,93 1568,134 1666,163 1786,203 1890,242 1904,253 1909,268`],
  [500, 260, 2.45, BLUE, `302,568 286,620 286,680 308,730 335,770 346,779|760,557 780,556 800,590 811,640 808,700 784,755|379,764 383,805 400,813 500,811 620,803 700,793 715,797 735,809 752,803 757,776`],
  [500, 260, 2.45, PURPLE, `346,722 355,706 385,704 398,720 390,748 370,750 358,735 365,715|398,745 425,760 452,772|466,742 475,765 472,794|498,646 504,700 512,752|494,758 515,725 535,712 544,725 540,750 525,752 512,740|582,724 575,750 576,788|640,660 628,690 632,715 650,722 672,700|672,667 695,662|668,692 708,688|690,664 688,692|716,610 716,700 740,684 752,682|752,670 760,730|757,632 760,616 775,618 786,640 780,680 768,705 790,708 806,702|722,848 790,882 860,930 918,975 932,991`],
  [500, 260, 2.45, LIME, `961,604 945,570 927,540 920,600 922,680 935,664 942,668 942,740 946,775 965,773 982,766`],
  [0, 570, 2.45, PURPLE, `767,-62 745,-10 711,117|798,-40 796,5 770,55 741,113|855,-58 852,60 860,95 885,105 903,80 895,58 870,55 852,70|935,40 915,55 915,85 935,96 957,75 950,45 925,38|1015,50 985,50 975,80 990,95 1012,80 1020,50|990,-38 1015,30 1038,98|1050,42 1060,85 1075,92 1092,65 1100,44 1120,110 1136,180 1125,205 1095,211 1022,209|542,826 552,886 575,870 600,885 618,893 620,865 604,842|640,848 655,880 675,860 682,842 715,915 744,980 735,1000 690,996 630,965 597,930|732,846 742,892 760,878 798,880 802,860 790,846|868,846 845,855 842,880 860,888 885,870 880,848 860,845|882,748 905,800 922,850 918,868|857,763 875,735 908,719|992,822 965,825 960,860 980,872 998,845 990,820 975,820 980,855 1010,870 1030,858|1032,858 1050,838 1070,838 1085,860 1088,884|1098,826 1120,868|1150,850 1152,828 1142,845 1155,880 1180,900 1202,902`],
  [0, 570, 2.45, BLUE, `740,320 755,355 765,387 752,350 745,328 760,325 785,322|785,355 815,340 820,325 805,320 795,345 800,375 820,384 842,365|850,226 862,290 868,376|842,320 888,304|908,330 915,365 928,385 950,360 966,325 970,384|1003,312 1008,350 1020,355 1040,312 1055,330 1058,380 1070,345 1090,318 1110,330 1115,384|1266,237 1262,270 1242,325 1255,333 1282,315|1275,290 1277,355|1312,262 1330,245 1355,250 1362,290 1340,345 1296,390 1330,377 1370,377 1396,386`],
  [0, 570, 2.45, GREY, `1194,380 1184,352 1192,400 1204,455 1250,453 1350,434 1420,429 1504,431 1500,418|1358,485 1395,520 1450,620 1500,735 1540,860 1568,935`],
  [0, 570, 2.45, LIME, `574,472 576,448 588,444 600,485 612,553 610,525 630,530 647,580 635,600 600,612 538,613`],
  [560, 580, 2.306, PURPLE, `790,85 760,82 740,105 742,138 765,145 785,125 788,90|745,145 800,148 818,115 820,96|820,96 826,135 840,105 852,115 858,130|895,95 868,100 865,140 880,150 896,125 890,95 915,140 950,200 968,250 960,285 920,300 860,296 825,275 812,256|926,105 945,140 962,164 975,125 988,120 998,150|998,150 1010,118 1024,125 1030,148 1050,125 1062,130 1074,153|1100,130 1112,105 1098,110 1094,145 1115,160 1140,140|1140,100 1148,150 1165,120 1185,130 1188,145|1190,38 1212,90 1218,142|1182,104 1222,84|1272,86 1245,88 1250,105 1290,130 1275,145 1256,148|750,302 728,305 722,335 745,348 775,330|795,312 778,335 790,352 812,340 805,315 790,312|812,320 830,310 848,318 852,345 870,322 885,340 910,318 925,320 936,348|945,310 955,335 975,312 990,325 995,345 1015,318 1035,325 1043,348|1080,298 1055,305 1052,335 1070,342 1085,320 1080,298 1075,330 1095,346 1118,338|1095,303 1128,299|1172,276 1160,275 1160,295 1200,318 1195,332 1172,332|1212,310 1235,300 1225,288 1212,315 1225,338 1250,320|1250,305 1278,310 1275,340 1258,345|1252,310 1262,380 1280,443 1270,400 1262,350|1340,292 1315,292 1312,320 1332,325 1342,305 1335,290 1350,320 1370,295|1365,290 1372,322 1385,295 1400,285|1415,290 1395,290 1390,315 1400,328 1418,310 1415,288 1425,325 1448,300|1446,178 1452,240 1445,310|1410,265 1450,245|1490,280 1470,285 1468,310 1485,325 1500,300 1500,285 1505,318 1520,320 1528,295|1505,215 1522,270 1522,310`],
  [560, 580, 2.306, PURPLE, `720,465 735,560 750,645 740,580 715,470 720,452 745,460 756,490 750,518 738,520|790,468 768,490 768,515 790,525 812,505 815,475 785,468|860,478 845,480 848,495 880,515 875,535 850,535|893,480 900,524|907,394 918,460 927,520|905,475 942,458|950,490 953,526|975,485 980,515 1000,525 1020,505 1012,480 998,485 1018,498 1030,492|1030,480 1045,520 1060,480 1078,480 1088,522|1140,488 1112,490 1112,520 1135,524 1145,500 1135,486 1150,518 1172,515|1172,515 1180,470 1170,400 1190,470 1209,529|720,700 695,715 692,745 715,752 732,730 728,702 708,700|755,695 750,760 778,845 770,790 755,715 765,698 778,710 775,740 760,755|790,617 802,690 811,748|780,688 818,686|845,695 853,742|885,700 870,715 875,745 895,745 906,720 895,700 880,700|915,702 925,738 945,705 960,715 962,742|1000,700 975,710 978,742 1000,745 1010,720 995,700|1020,745 1022,700 1007,605 1022,680 1036,748|1096,625 1100,680 1082,771|1165,712 1142,720 1138,755 1155,768 1172,745 1168,715|1155,632 1175,690 1184,750|1200,745 1222,735 1225,715 1208,715 1200,745 1215,768 1240,750|1302,912 1290,830 1250,720 1238,640 1245,607 1252,640 1248,720 1235,745 1262,742 1280,730|1310,712 1280,720 1280,750 1300,758 1318,735 1305,708 1325,735|1350,698 1335,735 1325,735|1350,698 1352,745 1365,768 1380,730 1385,710 1392,760|1385,615 1400,680 1414,748|1415,598 1435,680 1450,752|1412,684 1454,670`],
  [560, 580, 2.306, GREY, `810,920 822,970 835,1020`],
  [1180, 300, 2.24, YELLOW, `62,222 46,230 48,258 70,268 95,255 100,232 85,222|86,143 100,215 112,277|132,228 140,208 128,212 128,240 145,250 160,230 158,212 175,206 185,225 182,252 170,252|200,145 218,200 230,272|248,215 246,238 228,248 240,238 230,274 255,265 275,240 290,215 300,245 300,205 315,198 332,210 335,250 350,235 362,216 390,275 417,345 412,385 380,394 345,385 318,350 316,335 322,310|415,216 440,300 460,396 440,350 425,270 430,230 445,225 455,245 452,272|450,94 470,130 485,205 496,272|452,216 487,178|511,210 524,268 535,240 550,240 580,300 606,365 605,405 580,420 545,417 515,395 501,368|600,205 603,268 635,262 620,235 622,215 650,212 658,245 670,250 678,215 695,203 720,215 730,262|752,222 738,232 742,255 760,260 772,240 765,220 745,220|760,258 790,275 828,288|68,465 80,450 70,436 60,450 60,485 80,505 100,505 114,492|118,440 135,460 140,485 150,462 165,455 180,470 181,498|230,450 210,455 210,485 225,490 238,465 230,448|207,445 212,485 250,535 285,580 287,605 260,614 220,605 192,558|238,378 252,430 262,502|288,456 297,516|346,456 330,450 328,465 352,490 345,503 313,502|365,388 376,440 386,478 390,450 405,446 425,470 430,505 419,536`],
  [1180, 300, 2.24, YELLOW, `74,602 85,670 101,754|123,698 122,740 133,772 150,750 152,725 138,725|182,714 192,762 240,755 248,735 230,710|270,715 285,705 272,705 270,740 288,745 305,715 312,712|310,710 322,745 312,718 378,722|448,616 428,640 418,700 432,745 450,745 475,720|495,712 475,725 480,752 505,755 518,735 510,712 488,712|490,758 505,764 530,755 550,715 562,706 578,738 595,715 612,732 640,706 658,720 666,765|692,730 712,695 700,705 692,740 705,762 732,735|732,595 746,650 750,736|842,595 810,640 798,690 810,730 830,740 852,720|852,720 885,680 915,680 930,700 918,730 900,742 870,725 862,700|895,744 935,745 960,730 975,690 990,672 1003,700 995,735 970,746|1040,695 1070,675 1062,660 1035,675 1018,715 1040,742 1075,747 1111,737|1248,845 1249,847`],
  [1180, 570, 2.24, YELLOW, `95,14 103,80 120,160|135,96 146,165|156,30 170,100 184,170|145,90 201,86|218,135 235,130 235,112 220,118 218,150 235,165 258,150 268,118 278,155|270,118 298,112 312,162 325,135 342,110 385,180 415,245 405,270 370,278 320,274 283,263|451,146 450,210 442,242 433,244|376,280 385,370 406,480|348,326 360,400 372,462|419,322 360,350 322,378 340,390 400,396 436,415 435,445 405,465 340,464|558,95 535,100 527,135 545,155 570,145 580,118|582,118 598,148 612,130 626,110 640,165 652,225 645,255 610,260 585,250 564,230|724,313 700,230 688,120 672,0 680,-8 686,40 695,100 685,150 660,162 640,155 638,143 690,145 720,132|735,100 738,152 736,115 755,98 770,105 776,138 797,93 840,180 870,260 868,290 840,300 790,293 729,266|881,120 934,126|975,114 985,140 990,172 990,120 1010,115 1016,165|1033,112 1036,160 1055,150 1066,105 1052,115 1065,165 1085,175 1108,162|1144,112 1154,164 1165,115 1178,125 1182,155 1190,118 1200,182|1245,122 1222,135 1222,165 1245,175 1257,150 1250,115|1268,110 1300,112 1295,150 1285,180 1310,172 1320,140|1328,142 1340,180 1352,192 1370,194`],
  [1180, 570, 2.24, YELLOW, `975,300 980,280 1000,282 1015,310 1012,328 990,328|1037,292 1048,340 1066,290 1085,345 1094,375 1085,383 1070,376|1140,303 1125,270 1160,275 1158,300 1137,352 1165,318 1190,335 1205,338|1215,292 1195,300 1195,330 1220,340 1245,325|1255,290 1235,300 1238,330 1262,320 1270,275 1290,268 1290,300 1275,325 1298,322|1298,300 1318,330 1350,292 1365,350 1372,410 1345,430 1305,425 1288,400 1288,380|1380,295 1385,335 1405,305 1420,330|1460,290 1440,300 1440,325 1460,320 1468,295 1460,330 1475,343 1498,347|102,491 200,478 105,485 200,490 115,481 203,487 115,491 200,482|257,466 250,515 238,532 225,535|78,622 108,682 137,738 137,680 137,622|160,675 178,650 162,640 165,690 185,708 205,685 212,660|212,650 232,716 222,668 240,650 262,650|276,596 284,670 300,718 325,700 330,680 310,672 295,685|380,702 382,755 375,756|480,685 475,662 448,662 438,690 455,712 480,712 505,700|480,668 482,685 470,700 448,698|540,640 510,665 505,700 530,705 557,682|556,547 566,620 574,688|528,643 576,634|603,644 608,697|638,662 640,700 660,718 685,700 688,672 668,665 658,675|690,655 705,695 720,668 745,665 765,690 771,715 766,748`],
  [0, 920, 2.45, GREY, `1408,28 1440,22 1481,24 1478,50 1460,80 1430,55 1408,28|1455,90 1455,112 1480,115 1528,98|1536,50 1540,95 1555,60 1568,38|1472,210 1485,255 1503,292 1492,270|1434,202 1460,188 1505,188 1527,210 1520,228 1502,230|1545,190 1560,225 1568,190`],
  [640, 920, 2.45, GREY, `0,40 15,60 28,90 0,98|60,95 52,20 80,20 100,45|125,35 105,30 100,70 130,75 132,45 120,30 128,65 175,75|207,25 180,60 185,80 215,72|265,40 235,55 240,78 275,70 300,50 270,42 285,60 320,78 345,66|438,18 438,72 470,55 500,55 498,30 478,10|500,20 520,60 545,20 570,60 575,95 560,130|575,30 600,35 612,68|644,10 656,58|691,0 712,35 724,-10|702,15 722,35 692,70 742,70|0,185 40,190 22,240 60,210 70,190 50,195 55,220 95,225 100,190 130,225 150,180|155,185 175,215 185,175 215,230 205,252 160,250 130,238|250,170 252,208 272,190 262,168|325,175 290,180 290,208 320,205 335,180 345,208 370,210|517,276 495,200 445,130 448,118 470,125 488,170 465,205 455,222 480,218 500,205|470,115 490,130 540,138 560,120 562,105|525,175 535,212 550,175 575,180 579,212`],
];

// Catmull-Rom spline through the samples.
function spline(p) {
  const f = n => n.toFixed(1);
  let d = `M${f(p[0][0])} ${f(p[0][1])}`;
  for (let i = 0; i < p.length - 1; i++) {
    const a = p[i - 1] || p[i], b = p[i], c = p[i + 1], e = p[i + 2] || c;
    d += `C${f(b[0] + (c[0] - a[0]) / 6)} ${f(b[1] + (c[1] - a[1]) / 6)} ${f(c[0] - (e[0] - b[0]) / 6)} ${f(c[1] - (e[1] - b[1]) / 6)} ${f(c[0])} ${f(c[1])}`;
  }
  return d;
}

const layer = document.getElementById('strokes');
for (const [ox, oy, res, colour, strokes] of groups) {
  const path = document.createElementNS('http://www.w3.org/2000/svg', 'path');
  path.setAttribute('d', strokes.split('|').map(s =>
    spline(s.split(' ').map(q => {
      const [x, y] = q.split(',').map(Number);
      return [ox + x / res, oy + y / 3];
    }))).join(''));
  path.setAttribute('fill', 'none');
  path.setAttribute('stroke', colour);
  path.setAttribute('stroke-width', 2.7);
  path.setAttribute('stroke-linecap', 'round');
  path.setAttribute('stroke-linejoin', 'round');
  layer.append(path);
}
```
